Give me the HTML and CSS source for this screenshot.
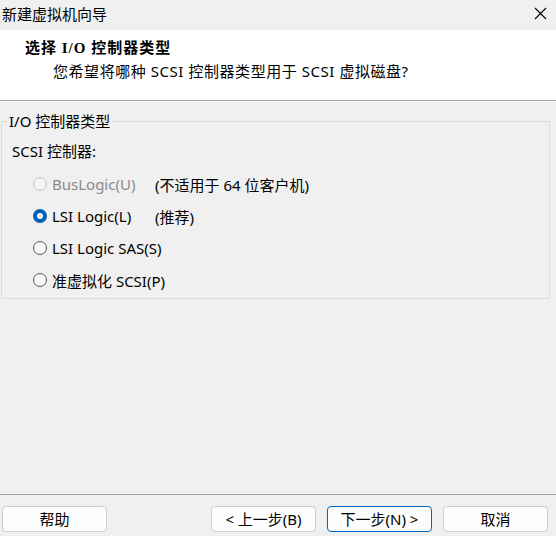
FILE: index.html
```html
<!DOCTYPE html>
<html lang="zh-CN">
<head>
<meta charset="utf-8">
<link rel="stylesheet" href="styles.css">
</head>
<body>
<div class="window">
  <div class="titlebar">
    <span class="title">新建虚拟机向导</span>
    <span class="close"><svg width="13" height="13" viewBox="0 0 13 13"><path d="M1 1 L12 12 M12 1 L1 12" stroke="#000" stroke-width="1.1" fill="none"/></svg></span>
  </div>
  <div class="header">
    <div class="h-title">选择 I/O 控制器类型</div>
    <div class="h-sub">您希望将哪种 SCSI 控制器类型用于 SCSI 虚拟磁盘?</div>
  </div>
  <div class="content">
    <fieldset class="group">
      <legend>I/O 控制器类型</legend>
      <div class="group-label">SCSI 控制器:</div>
      <div class="row disabled"><span class="radio"></span><span class="opt">BusLogic(U)</span><span class="note">(不适用于 64 位客户机)</span></div>
      <div class="row"><span class="radio checked"></span><span class="opt">LSI Logic(L)</span><span class="note">(推荐)</span></div>
      <div class="row"><span class="radio"></span><span class="opt">LSI Logic SAS(S)</span></div>
      <div class="row"><span class="radio"></span><span class="opt">准虚拟化 SCSI(P)</span></div>
    </fieldset>
  </div>
  <div class="footer">
    <button class="btn help">帮助</button>
    <div class="nav">
      <button class="btn">&lt; 上一步(B)</button>
      <button class="btn default">下一步(N) &gt;</button>
      <button class="btn">取消</button>
    </div>
  </div>
</div>
</body>
</html>
```
FILE: styles.css
```css
html, body {
  margin: 0;
  padding: 0;
  background: #f0f0f0;
}
body {
  font-family: "Noto Sans", "Noto Sans CJK SC", sans-serif;
  font-size: 15px;
  color: #000;
}
.window {
  width: 556px;
  height: 536px;
  display: flex;
  flex-direction: column;
  overflow: hidden;
}
.titlebar {
  height: 30px;
  display: flex;
  align-items: center;
  justify-content: space-between;
  padding: 0 9px 3px 2px;
  box-sizing: border-box;
  background: #f0f0f0;
}
.title {
  font-family: "Noto Sans CJK SC", sans-serif;
  font-size: 15px;
  line-height: 20px;
}
.close {
  display: flex;
}
.header {
  height: 71px;
  background: #fff;
  box-sizing: border-box;
  padding: 8px 0 0 25px;
  border-bottom: 1px solid #a0a0a0;
}
.h-title {
  font-family: "Liberation Serif", "Noto Sans CJK SC", serif;
  font-weight: bold;
  font-size: 15px;
  line-height: 20px;
  letter-spacing: 1px;
}
.h-sub {
  margin: 3px 0 0 28px;
  line-height: 20px;
  letter-spacing: 0.55px;
}
.content {
  flex: 1;
  border-top: 1px solid #fff;
  padding-top: 10px;
}
.group {
  margin: 0 6px 0 1px;
  padding: 0 0 2px 0;
  border: 1px solid #dcdcdc;
}
.group legend {
  margin-left: 5px;
  padding: 0 2px;
  line-height: 18px;
}
.group-label {
  padding: 11px 0 0 10px;
  line-height: 20px;
  margin-bottom: 7px;
}
.row {
  height: 32px;
  display: flex;
  align-items: center;
  padding-left: 31px;
}
.radio {
  width: 14px;
  height: 14px;
  box-sizing: border-box;
  border: 1px solid #555;
  border-radius: 50%;
  background: #f8f8f8;
  margin-right: 5px;
  flex: none;
}
.radio.checked {
  border: 4px solid #005fb8;
  background: #fff;
}
.row.disabled .radio {
  border-color: #c8c8c8;
  background: #f5f5f5;
}
.row.disabled .opt {
  color: #8a8a8a;
}
.opt {
  width: 103px;
  white-space: nowrap;
}
.note {
  white-space: nowrap;
}
.footer {
  height: 42px;
  border-top: 1px solid #a0a0a0;
  box-sizing: border-box;
  padding: 11px 8px 0 2px;
  display: flex;
  justify-content: space-between;
  align-items: flex-start;
}
.nav {
  display: flex;
  gap: 11px;
}
.btn {
  width: 105px;
  height: 26px;
  box-sizing: border-box;
  border: 1px solid #d0d0d0;
  border-radius: 4px;
  background: #fdfdfd;
  font-family: "Noto Sans", "Noto Sans CJK SC", sans-serif;
  font-size: 15px;
  line-height: 20px;
  padding: 0;
  color: #000;
}
.btn.default {
  border-color: #0067c0;
}
```
